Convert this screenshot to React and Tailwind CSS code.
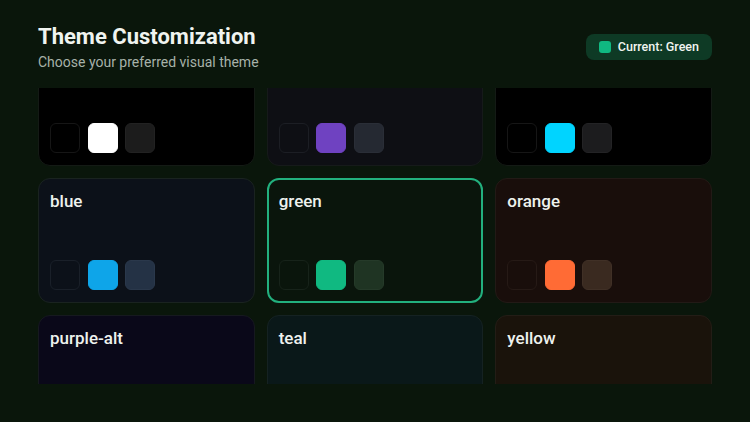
import React, { useEffect, useRef } from "react";

const themes = [
  { name: "dark", bg: "bg-[#000000]", border: "border-[#141a15]", sw: ["bg-[#000000] border-[#161616]", "bg-[#ffffff] border-[#ffffff]", "bg-[#1c1c1c] border-[#222222]"] },
  { name: "purple", bg: "bg-[#0e0f14]", border: "border-[#161a1a]", sw: ["bg-[#0e0f14] border-[#1c1e24]", "bg-[#6f42c1] border-[#6f42c1]", "bg-[#252932] border-[#2a2e37]"] },
  { name: "cyan", bg: "bg-[#000000]", border: "border-[#141a15]", sw: ["bg-[#000000] border-[#161616]", "bg-[#00d4ff] border-[#00d4ff]", "bg-[#1c1c1e] border-[#232325]"] },
  { name: "blue", bg: "bg-[#0c1119]", border: "border-[#1a2320]", sw: ["bg-[#0c1119] border-[#1a2029]", "bg-[#0ea5e9] border-[#0ea5e9]", "bg-[#243245] border-[#2a384b]"] },
  { name: "green", bg: "bg-[#0a150c]", border: "border-[#22b07e]", selected: true, sw: ["bg-[#0a150c] border-[#17231a]", "bg-[#10b981] border-[#10b981]", "bg-[#1f3423] border-[#253a29]"] },
  { name: "orange", bg: "bg-[#190e0b]", border: "border-[#221a16]", sw: ["bg-[#190e0b] border-[#261a16]", "bg-[#ff6b35] border-[#ff6b35]", "bg-[#3a2a20] border-[#403026]"] },
  { name: "purple-alt", bg: "bg-[#0a0819]", border: "border-[#16191f]", sw: ["bg-[#0a0819] border-[#181628]", "bg-[#8b5cf6] border-[#8b5cf6]", "bg-[#1e1a35] border-[#24203b]"] },
  { name: "teal", bg: "bg-[#0a1819]", border: "border-[#152222]", sw: ["bg-[#0a1819] border-[#162626]", "bg-[#14b8a6] border-[#14b8a6]", "bg-[#1a3032] border-[#203638]"] },
  { name: "yellow", bg: "bg-[#1a130b]", border: "border-[#231d16]", sw: ["bg-[#1a130b] border-[#271f16]", "bg-[#eab308] border-[#eab308]", "bg-[#3a2e1c] border-[#403422]"] },
];

export default function App() {
  const ref = useRef(null);
  useEffect(() => {
    if (ref.current) ref.current.scrollTop = 47;
  }, []);
  return (
    <div
      className="h-[422px] w-[750px] overflow-hidden bg-[#0a160b] px-[38px] pt-[22px] text-[#eef2ee]"
      style={{ fontFamily: "Roboto, 'Liberation Sans', sans-serif" }}
    >
      <div className="flex items-center justify-between">
        <div>
          <h1 className="text-[22px] font-bold leading-[30px] text-[#f0f4f0]">Theme Customization</h1>
          <p className="text-[14px] leading-[20px] text-[#a7b2a9]">Choose your preferred visual theme</p>
        </div>
        <div className="flex h-[26px] items-center gap-[7px] rounded-lg bg-[#0e3a25] pl-[13px] pr-[13px]">
          <span className="h-[12px] w-[12px] rounded-[3px] bg-[#10b981]" />
          <span className="text-[12.5px] font-medium text-[#f0f4f0]">Current: Green</span>
        </div>
      </div>
      <div
        ref={ref}
        className="mt-[16px] h-[296px] overflow-y-auto [scrollbar-width:none]"
      >
        <div className="grid grid-cols-3 gap-x-[12px] gap-y-[12px] pb-[4px]">
          {themes.map((t) => (
            <div
              key={t.name}
              className={`flex h-[125px] flex-col justify-between rounded-xl ${t.selected ? "border-2" : "border"} ${t.border} ${t.bg} ${t.selected ? "px-[10px] pb-[11px] pt-[10px]" : "px-[11px] pb-[12px] pt-[11px]"}`}
            >
              <div className="text-[17px] font-medium leading-[22px] text-[#eef2ee]">{t.name}</div>
              <div className="flex gap-[7.5px]">
                {t.sw.map((s, i) => (
                  <span key={i} className={`h-[30px] w-[30px] rounded-md border ${s}`} />
                ))}
              </div>
            </div>
          ))}
        </div>
      </div>
    </div>
  );
}
